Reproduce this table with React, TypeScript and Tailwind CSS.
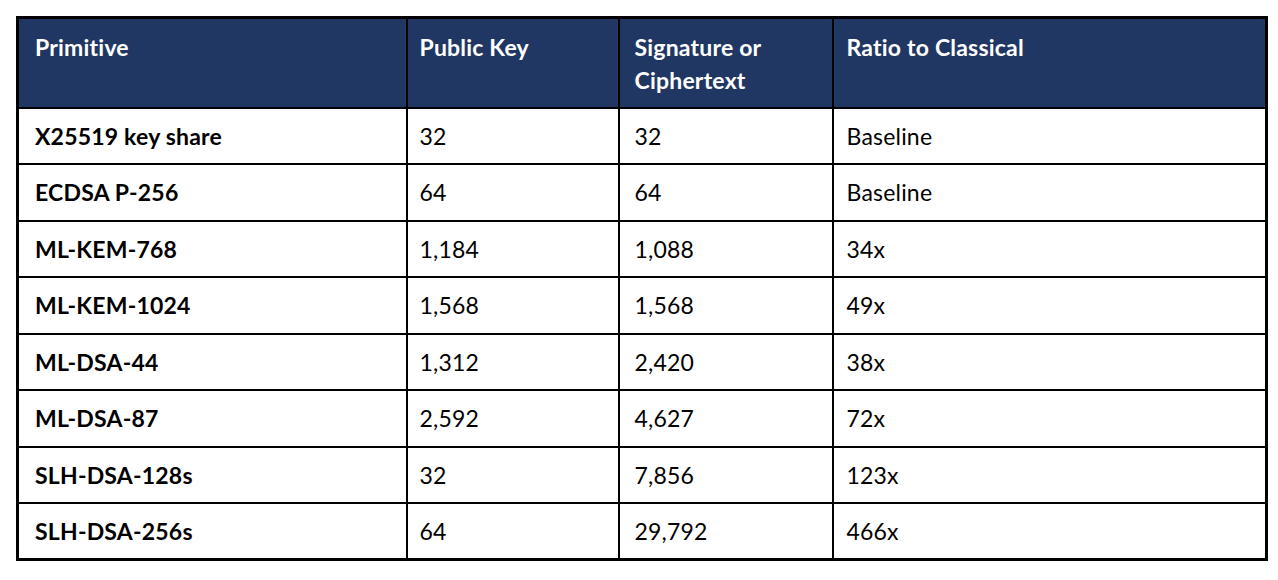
const rows = [
  ["X25519 key share", "32", "32", "Baseline"],
  ["ECDSA P-256", "64", "64", "Baseline"],
  ["ML-KEM-768", "1,184", "1,088", "34x"],
  ["ML-KEM-1024", "1,568", "1,568", "49x"],
  ["ML-DSA-44", "1,312", "2,420", "38x"],
  ["ML-DSA-87", "2,592", "4,627", "72x"],
  ["SLH-DSA-128s", "32", "7,856", "123x"],
  ["SLH-DSA-256s", "64", "29,792", "466x"],
];

export default function App() {
  return (
    <div className="w-[1278px] h-[580px] bg-white pt-[16px] pl-[16px] font-['Lato',sans-serif] text-[23px] tracking-[0.2px] text-black">
      <table className="w-[1249px] table-fixed border-collapse border-[3px] border-black">
        <colgroup>
          <col className="w-[389px]" />
          <col className="w-[212px]" />
          <col className="w-[214px]" />
          <col className="w-[434px]" />
        </colgroup>
        <thead>
          <tr className="h-[90px] bg-[#213763] text-white">
            <th className="border-2 border-black text-left align-top pl-[16px] pt-[12px] leading-[33px] font-bold">Primitive</th>
            <th className="border-2 border-black text-left align-top pl-[12px] pt-[12px] leading-[33px] font-bold">Public Key</th>
            <th className="border-2 border-black text-left align-top pl-[15px] pt-[12px] leading-[33px] font-bold">
              Signature or
              <br />
              Ciphertext
            </th>
            <th className="border-2 border-black text-left align-top pl-[13px] pt-[12px] leading-[33px] font-bold">Ratio to Classical</th>
          </tr>
        </thead>
        <tbody>
          {rows.map((r) => (
            <tr key={r[0]} className="h-[56.5px]">
              <td className="border-2 border-black pl-[16px] font-bold">{r[0]}</td>
              <td className="border-2 border-black pl-[12px]">{r[1]}</td>
              <td className="border-2 border-black pl-[15px]">{r[2]}</td>
              <td className="border-2 border-black pl-[13px]">{r[3]}</td>
            </tr>
          ))}
        </tbody>
      </table>
    </div>
  );
}
